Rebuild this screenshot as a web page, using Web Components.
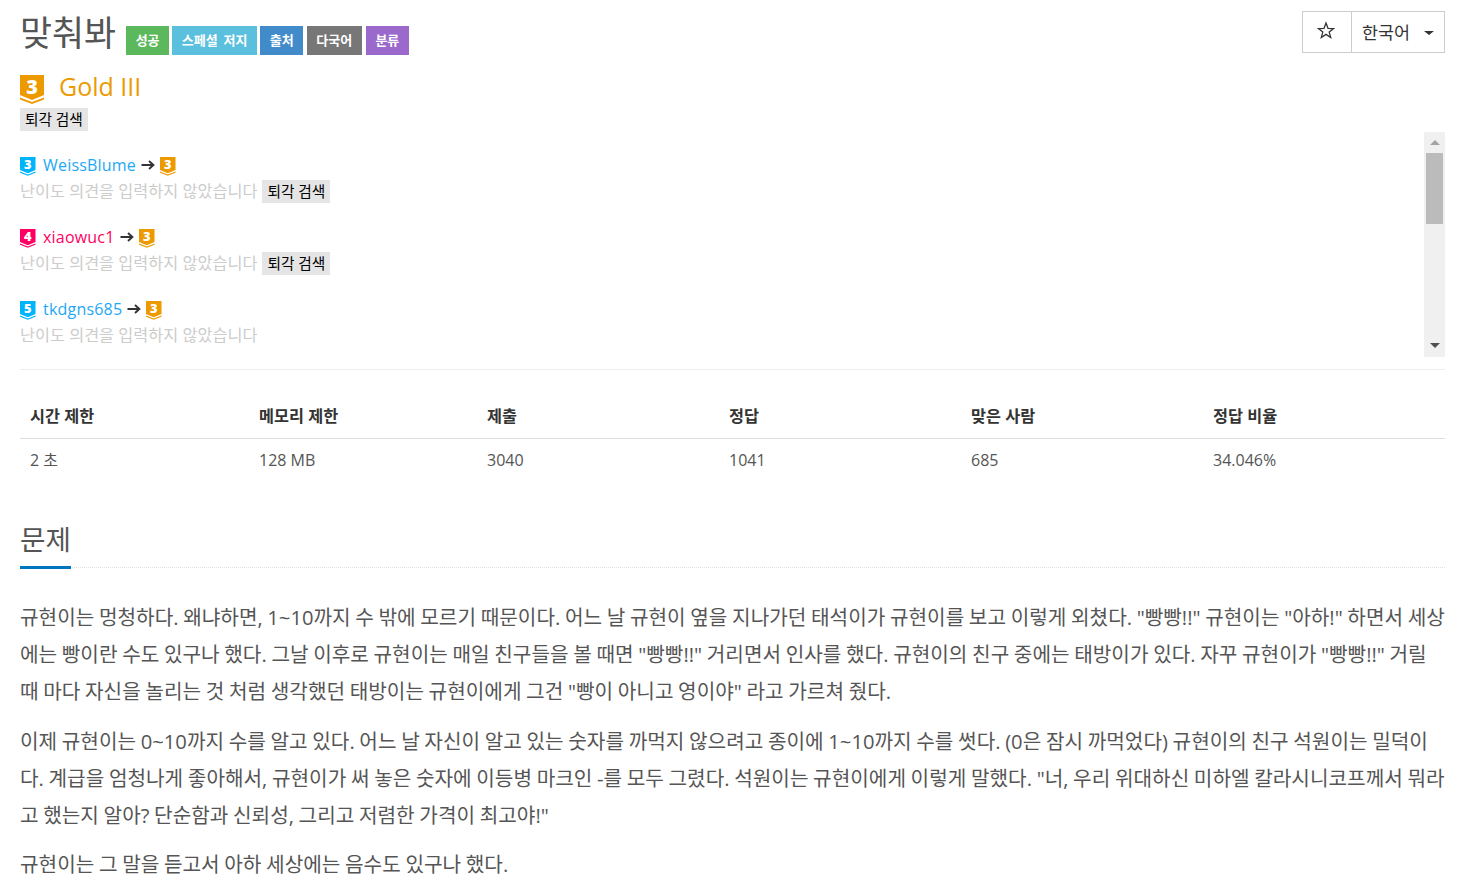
<!DOCTYPE html>
<html lang="ko">
<head>
<meta charset="utf-8">
<title>맞춰봐</title>
<style>
    html, body { margin: 0; background: #fff; }
    body {
        font-family: "Open Sans", "Noto Sans CJK KR", sans-serif;
        font-size: 14px;
        color: #555;
        overflow: hidden;
        height: 887px;
    }
</style>
</head>
<body>
<problem-page></problem-page>

<script>
const badgeColors = { gold: '#ec9a00', sky: '#00b4fc', ruby: '#ff0062' };

class TierBadge extends HTMLElement {
    static get observedAttributes() { return ['level', 'tier', 'size']; }
    connectedCallback() { this.render(); }
    attributeChangedCallback() { this.render(); }
    render() {
        if (!this.shadowRoot) this.attachShadow({ mode: 'open' });
        const color = badgeColors[this.getAttribute('tier')] || badgeColors.gold;
        const w = this.getAttribute('size') || 15.5;
        this.shadowRoot.innerHTML = `
            <style>
                :host { display: inline-block; vertical-align: middle; }
                svg { display: block; overflow: visible; }
                text { font-family: "Open Sans", sans-serif; font-weight: 800; font-size: 20px; fill: #fff; }
            </style>
            <svg width="${w}" height="${w * 1.21}" viewBox="0 0 24 29">
                <path fill="${color}" d="M0 0H24V20L12 25 0 20Z"/>
                <path fill="${color}" d="M0 22.5 12 27 24 22.5V24.5L12 29 0 24.5Z"/>
                <text x="12" y="18.5" text-anchor="middle">${this.getAttribute('level')}</text>
            </svg>
        `;
    }
}
customElements.define('tier-badge', TierBadge);

class HeadLabel extends HTMLElement {
    constructor() {
        super();
        this.attachShadow({ mode: 'open' }).innerHTML = `
            <style>
                :host {
                    display: inline-block;
                    height: 29px;
                    line-height: 29px;
                    padding: 0 9.6px;
                    font-size: 13px;
                    font-weight: 700;
                    word-spacing: 2.6px;
                    color: #fff;
                    background: var(--bg, #777);
                }
            </style>
            <slot></slot>
        `;
    }
}
customElements.define('head-label', HeadLabel);

class SpoilerTag extends HTMLElement {
    constructor() {
        super();
        this.attachShadow({ mode: 'open' }).innerHTML = `
            <style>
                :host {
                    display: inline-block;
                    height: 23px;
                    line-height: 22px;
                    padding: 0 5px;
                    font-size: 14.7px;
                    color: #000;
                    background: #e5e5e5;
                    vertical-align: top;
                }
            </style>
            <slot>퇴각 검색</slot>
        `;
    }
}
customElements.define('spoiler-tag', SpoilerTag);

class OpinionRow extends HTMLElement {
    constructor() {
        super();
        const from = this.getAttribute('from');
        const level = this.getAttribute('level');
        const color = this.getAttribute('color');
        const hasTag = this.hasAttribute('tag');
        this.attachShadow({ mode: 'open' }).innerHTML = `
            <style>
                :host { display: block; height: 72px; font-size: 16px; }
                .who { display: flex; align-items: center; height: 26px; line-height: 26px; }
                .who a { margin: 0 5px 0 7.5px; color: ${color}; text-decoration: none; letter-spacing: 0.2px; }
                .who tier-badge { margin-top: 2px; }
                .arrow { margin-right: 5px; display: block; }
                .note { display: flex; gap: 5px; height: 23px; margin-top: 2px; line-height: 23px; color: #ccc; font-size: 16.3px; }
            </style>
            <div class="who">
                <tier-badge tier="${from}" level="${level}"></tier-badge>
                <a href="#">${this.getAttribute('name')}</a>
                <svg class="arrow" width="14" height="10" viewBox="0 0 14 10"><path d="M0.5 5H12M8 1l4.4 4L8 9" fill="none" stroke="#333" stroke-width="1.9"/></svg>
                <tier-badge tier="gold" level="3"></tier-badge>
            </div>
            <div class="note">난이도 의견을 입력하지 않았습니다${hasTag ? '<spoiler-tag></spoiler-tag>' : ''}</div>
        `;
    }
}
customElements.define('opinion-row', OpinionRow);

class OpinionList extends HTMLElement {
    constructor() {
        super();
        this.attachShadow({ mode: 'open' }).innerHTML = `
            <style>
                :host {
                    display: flex;
                    height: 225px;
                    padding-bottom: 12px;
                    border-bottom: 1px solid #eee;
                    overflow: hidden;
                }
                .rows { flex: 1; padding-top: 20px; overflow: hidden; }
                .bar {
                    width: 21px;
                    flex: none;
                    background: #f0f0f0;
                    display: flex;
                    flex-direction: column;
                    align-items: center;
                    justify-content: space-between;
                    box-sizing: border-box;
                    padding: 8px 0 9px;
                }
                .thumb {
                    width: 17px;
                    height: 71px;
                    margin-top: 8px;
                    background: #bbb;
                }
                .up, .down { width: 0; height: 0; border: 5px solid transparent; }
                .up { border-top: 0; border-bottom: 5px solid #a3a3a3; }
                .down { border-bottom: 0; border-top: 5px solid #505050; }
                .spacer { flex: 1; }
            </style>
            <div class="rows"><slot></slot></div>
            <div class="bar">
                <div class="up"></div>
                <div class="thumb"></div>
                <div class="spacer"></div>
                <div class="down"></div>
            </div>
        `;
    }
}
customElements.define('opinion-list', OpinionList);

class StatsTable extends HTMLElement {
    constructor() {
        super();
        this.attachShadow({ mode: 'open' }).innerHTML = `
            <style>
                :host { display: block; margin-top: 26px; font-size: 16px; }
                .row {
                    display: grid;
                    grid-template-columns: 229px 228px 242px 242px 242px 1fr;
                    padding: 0 10px;
                }
                .head { height: 42px; line-height: 40px; font-weight: 700; color: #333; font-size: 16.3px; border-bottom: 1px solid #ddd; }
                .body { height: 43px; line-height: 42px; }
            </style>
            <div class="row head">
                <span>시간 제한</span><span>메모리 제한</span><span>제출</span><span>정답</span><span>맞은 사람</span><span>정답 비율</span>
            </div>
            <div class="row body">
                <span>2 초</span><span>128 MB</span><span>3040</span><span>1041</span><span>685</span><span>34.046%</span>
            </div>
        `;
    }
}
customElements.define('stats-table', StatsTable);

class SectionHeadline extends HTMLElement {
    constructor() {
        super();
        this.attachShadow({ mode: 'open' }).innerHTML = `
            <style>
                :host { display: block; border-bottom: 1px dotted #e0e0e0; height: 57px; margin-top: 28px; }
                h2 {
                    display: inline-block;
                    margin: 0;
                    height: 56px;
                    line-height: 58px;
                    font-size: 27.7px;
                    font-weight: 400;
                    border-bottom: 3px solid #0076c0;
                }
            </style>
            <h2><slot></slot></h2>
        `;
    }
}
customElements.define('section-headline', SectionHeadline);

class ProblemText extends HTMLElement {
    constructor() {
        super();
        this.attachShadow({ mode: 'open' }).innerHTML = `
            <style>
                :host { display: block; margin-top: 31px; font-size: 20.2px; word-spacing: -0.6px; line-height: 37px; color: #555; }
                ::slotted(p) { margin: 0 0 12px; }
                ::slotted(p:first-child) { margin-bottom: 13px; }
            </style>
            <slot></slot>
        `;
    }
}
customElements.define('problem-text', ProblemText);

class LangMenu extends HTMLElement {
    constructor() {
        super();
        this.attachShadow({ mode: 'open' }).innerHTML = `
            <style>
                :host {
                    display: flex;
                    height: 40px;
                    border: 1px solid #ccc;
                    font-size: 17.4px;
                    color: #333;
                }
                .star { width: 49px; border-right: 1px solid #ccc; display: flex; align-items: center; justify-content: center; padding: 0 2px 5px 0; box-sizing: border-box; }
                .lang { width: 92px; display: flex; align-items: center; padding: 0 0 2px 10px; box-sizing: border-box; }
                .caret {
                    margin: 3px 10px 0 auto;
                    width: 0;
                    height: 0;
                    border: 5px solid transparent;
                    border-top: 4px solid #333;
                    border-bottom: 0;
                }
            </style>
            <div class="star">
                <svg width="18" height="18" viewBox="0 0 18 18"><path d="M9 2l2 5.3 5.6.3-4.4 3.5 1.5 5.4L9 13.4l-4.7 3.1 1.5-5.4L1.4 7.6 7 7.3z" fill="none" stroke="#333" stroke-width="1.3"/></svg>
            </div>
            <div class="lang">한국어<span class="caret"></span></div>
        `;
    }
}
customElements.define('lang-menu', LangMenu);

class ProblemPage extends HTMLElement {
    constructor() {
        super();
        this.attachShadow({ mode: 'open' }).innerHTML = `
            <style>
                :host { display: block; padding: 11px 19px 0 20px; }
                header { display: flex; justify-content: space-between; align-items: flex-start; height: 44px; }
                .title { display: flex; align-items: flex-end; }
                h1 { margin: 0; font-size: 34.8px; line-height: 44px; font-weight: 400; color: #555; }
                .labels { display: flex; gap: 3px; margin-left: 10px; }
                .labels head-label:nth-child(3) { margin-right: 0.5px; }
                .labels head-label:nth-child(4) { margin-right: 1px; }
                .tier { display: flex; align-items: center; height: 29px; margin-top: 20px; font-size: 25px; color: #ec9a00; }
                .tier span { margin: -8px 0 0 15px; }
                .tags { height: 23px; margin-top: 4px; }
                opinion-list { margin-top: 1px; }
            </style>
            <header>
                <div class="title">
                    <h1>맞춰봐</h1>
                    <div class="labels">
                        <head-label style="--bg:#5cb85c">성공</head-label>
                        <head-label style="--bg:#5bc0de">스페셜 저지</head-label>
                        <head-label style="--bg:#428bca">출처</head-label>
                        <head-label style="--bg:#777">다국어</head-label>
                        <head-label style="--bg:#9b69cb">분류</head-label>
                    </div>
                </div>
                <lang-menu></lang-menu>
            </header>
            <div class="tier"><tier-badge tier="gold" level="3" size="24"></tier-badge><span>Gold III</span></div>
            <div class="tags"><spoiler-tag></spoiler-tag></div>
            <opinion-list>
                <opinion-row from="sky" level="3" color="#1ea8f5" name="WeissBlume" tag></opinion-row>
                <opinion-row from="ruby" level="4" color="#ff0062" name="xiaowuc1" tag></opinion-row>
                <opinion-row from="sky" level="5" color="#1ea8f5" name="tkdgns685"></opinion-row>
            </opinion-list>
            <stats-table></stats-table>
            <section-headline>문제</section-headline>
            <problem-text>
                <p>규현이는 멍청하다. 왜냐하면, 1~10까지 수 밖에 모르기 때문이다. 어느 날 규현이 옆을 지나가던 태석이가 규현이를 보고 이렇게 외쳤다. "빵빵!!" 규현이는 "아하!" 하면서 세상에는 빵이란 수도 있구나 했다. 그날 이후로 규현이는 매일 친구들을 볼 때면 "빵빵!!" 거리면서 인사를 했다. 규현이의 친구 중에는 태방이가 있다. 자꾸 규현이가 "빵빵!!" 거릴 때 마다 자신을 놀리는 것 처럼 생각했던 태방이는 규현이에게 그건 "빵이 아니고 영이야" 라고 가르쳐 줬다.</p>
                <p>이제 규현이는 0~10까지 수를 알고 있다. 어느 날 자신이 알고 있는 숫자를 까먹지 않으려고 종이에 1~10까지 수를 썻다. (0은 잠시 까먹었다) 규현이의 친구 석원이는 밀덕이다. 계급을 엄청나게 좋아해서, 규현이가 써 놓은 숫자에 이등병 마크인 -를 모두 그렸다. 석원이는 규현이에게 이렇게 말했다. "너, 우리 위대하신 미하엘 칼라시니코프께서 뭐라고 했는지 알아? 단순함과 신뢰성, 그리고 저렴한 가격이 최고야!"</p>
                <p>규현이는 그 말을 듣고서 아하 세상에는 음수도 있구나 했다.</p>
            </problem-text>
        `;
    }
}
customElements.define('problem-page', ProblemPage);
</script>
</body>
</html>
